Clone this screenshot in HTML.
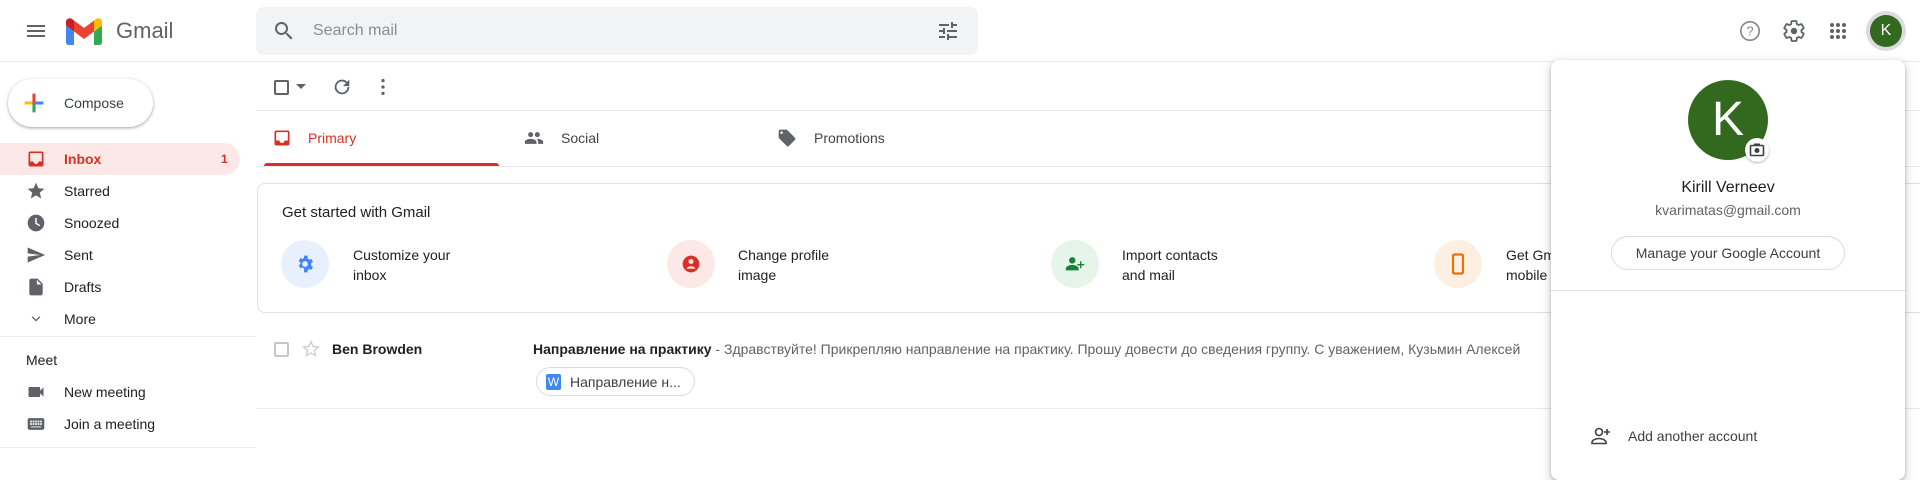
<!DOCTYPE html>
<html><head><meta charset="utf-8"><style>
*{box-sizing:border-box;margin:0;padding:0}
body{width:1920px;height:454px;overflow:hidden;background:#fff;font-family:"Liberation Sans",Arial,sans-serif;color:#202124;position:relative}
.a{position:absolute}
.t{position:absolute;white-space:nowrap}
.row{position:absolute;left:0;width:240px;height:32px}
.row .t{left:64px;top:8px;font-size:14px;color:#202124}
.row svg{position:absolute;left:26px;top:6px}
.circ{position:absolute;width:48px;height:48px;border-radius:50%}
.ct{position:absolute;font-size:14px;line-height:20px;color:#202124}
</style></head><body>
<!-- header -->
<svg class="a" style="left:24px;top:19px" width="24" height="24" viewBox="0 0 24 24"><path d="M3 18h18v-2H3v2zm0-5h18v-2H3v2zm0-7v2h18V6H3z" fill="#5f6368"/></svg>
<svg class="a" style="left:66px;top:18px" width="36" height="27" viewBox="0 0 36 27"><path d="M2.5 27H8V13.5L0 7.5v17A2.5 2.5 0 002.5 27z" fill="#4285f4"/><path d="M28 27h5.5A2.5 2.5 0 0036 24.5v-17l-8 6z" fill="#34a853"/><path d="M28 2.5v11l8-6V4c0-3-3.5-4.8-6-3z" fill="#fbbc04"/><path d="M8 13.5v-11l10 7.5 10-7.5v11l-10 7.5z" fill="#ea4335"/><path d="M0 4v3.5l8 6v-11L6 1C3.5-.8 0 1 0 4z" fill="#c5221f"/></svg>
<div class="t" style="left:116px;top:18px;font-size:22px;color:#5f6368">Gmail</div>
<div class="a" style="left:256px;top:7px;width:722px;height:48px;background:#f1f3f4;border-radius:8px"></div>
<svg class="a" style="left:272px;top:19px" width="24" height="24" viewBox="0 0 24 24"><path d="M15.5 14h-.79l-.28-.27A6.47 6.47 0 0016 9.5 6.5 6.5 0 109.5 16c1.61 0 3.09-.59 4.23-1.57l.27.28v.79l5 4.99L20.49 19l-4.99-5zm-6 0C7.01 14 5 11.99 5 9.5S7.01 5 9.5 5 14 7.01 14 9.5 11.99 14 9.5 14z" fill="#5f6368"/></svg>
<div class="t" style="left:313px;top:22px;font-size:16px;color:#8a8d91">Search mail</div>
<svg class="a" style="left:936px;top:19px" width="24" height="24" viewBox="0 0 24 24"><path d="M3 17v2h6v-2H3zM3 5v2h10V5H3zm10 16v-2h8v-2h-8v-2h-2v6h2zM7 9v2H3v2h4v2h2V9H7zm14 4v-2H11v2h10zm-6-4h2V7h4V5h-4V3h-2v6z" fill="#5f6368"/></svg>
<svg class="a" style="left:1738px;top:19px" width="24" height="24" viewBox="0 0 24 24"><circle cx="12" cy="12" r="9.2" fill="none" stroke="#80868b" stroke-width="1.6"/><text x="12" y="16.5" font-size="13" text-anchor="middle" fill="#80868b" font-family="Liberation Sans">?</text></svg>
<svg class="a" style="left:1782px;top:19px" width="24" height="24" viewBox="0 0 24 24"><path d="M19.43 12.98c.04-.32.07-.64.07-.98s-.03-.66-.07-.98l2.11-1.65a.5.5 0 00.12-.64l-2-3.46a.5.5 0 00-.61-.22l-2.49 1a7.3 7.3 0 00-1.69-.98l-.38-2.65A.49.49 0 0014 2h-4a.49.49 0 00-.49.42l-.38 2.65c-.61.25-1.17.59-1.69.98l-2.49-1a.5.5 0 00-.61.22l-2 3.46a.49.49 0 00.12.64l2.11 1.65c-.04.32-.07.65-.07.98s.03.66.07.98l-2.11 1.65a.5.5 0 00-.12.64l2 3.46c.12.22.39.3.61.22l2.49-1c.52.4 1.08.73 1.69.98l.38 2.65c.03.24.24.42.49.42h4c.25 0 .46-.18.49-.42l.38-2.65c.61-.25 1.17-.59 1.69-.98l2.49 1c.23.09.49 0 .61-.22l2-3.46a.5.5 0 00-.12-.64l-2.11-1.65z" fill="none" stroke="#5f6368" stroke-width="1.8"/><circle cx="12" cy="12" r="3.2" fill="#5f6368"/></svg>
<svg class="a" style="left:1826px;top:19px" width="24" height="24" viewBox="0 0 24 24" fill="#5f6368"><circle cx="6" cy="6" r="2"/><circle cx="12" cy="6" r="2"/><circle cx="18" cy="6" r="2"/><circle cx="6" cy="12" r="2"/><circle cx="12" cy="12" r="2"/><circle cx="18" cy="12" r="2"/><circle cx="6" cy="18" r="2"/><circle cx="12" cy="18" r="2"/><circle cx="18" cy="18" r="2"/></svg>
<div class="a" style="left:1866px;top:11px;width:40px;height:40px;border-radius:50%;background:#dadce0"></div>
<div class="a" style="left:1870px;top:15px;width:32px;height:32px;border-radius:50%;background:#33691e;color:#fff;font-size:16px;text-align:center;line-height:32px">K</div>
<div class="a" style="left:0;top:61px;width:1920px;height:1px;background:#e8eaed"></div>
<!-- sidebar -->
<div class="a" style="left:8px;top:79px;width:145px;height:48px;border-radius:24px;background:#fff;box-shadow:0 1px 2px rgba(60,64,67,.3),0 1px 3px 1px rgba(60,64,67,.15)"></div>
<svg class="a" style="left:20px;top:89px" width="28" height="28" viewBox="0 0 36 36"><path d="M16 16v14h4V20z" fill="#34a853"/><path d="M30 16H20l-4 4h14z" fill="#4285f4"/><path d="M6 16v4h10l4-4z" fill="#fbbc05"/><path d="M20 16V6h-4v14z" fill="#ea4335"/></svg>
<div class="t" style="left:64px;top:95px;font-size:14px;font-weight:500;color:#3c4043">Compose</div>
<div class="a" style="left:0;top:143px;width:240px;height:32px;background:#fce8e6;border-radius:0 16px 16px 0"></div>
<div class="row" style="top:143px"><svg width="20" height="20" viewBox="0 0 24 24"><path d="M19 3H5c-1.1 0-2 .9-2 2v14c0 1.1.9 2 2 2h14c1.1 0 2-.9 2-2V5c0-1.1-.9-2-2-2zm0 12h-4c0 1.66-1.35 3-3 3s-3-1.34-3-3H5V5h14v10z" fill="#d93025"/></svg><div class="t" style="color:#d93025;font-weight:bold">Inbox</div><div class="t" style="left:221px;color:#d93025;font-size:12px;font-weight:bold;top:9px">1</div></div>
<div class="row" style="top:175px"><svg width="20" height="20" viewBox="0 0 24 24"><path d="M12 17.27L18.18 21l-1.64-7.03L22 9.24l-7.19-.61L12 2 9.19 8.63 2 9.24l5.46 4.73L5.82 21z" fill="#5f6368"/></svg><div class="t">Starred</div></div>
<div class="row" style="top:207px"><svg width="20" height="20" viewBox="0 0 24 24"><circle cx="12" cy="12" r="10" fill="#5f6368"/><path d="M12 6v6.5l4.5 2.7" stroke="#fff" stroke-width="1.8" fill="none"/></svg><div class="t">Snoozed</div></div>
<div class="row" style="top:239px"><svg width="20" height="20" viewBox="0 0 24 24"><path d="M2.01 21L23 12 2.01 3 2 10l15 2-15 2z" fill="#5f6368"/></svg><div class="t">Sent</div></div>
<div class="row" style="top:271px"><svg width="20" height="20" viewBox="0 0 24 24"><path d="M6 2c-1.1 0-2 .9-2 2v16c0 1.1.9 2 2 2h12c1.1 0 2-.9 2-2V8l-6-6H6zm7 7V3.5L18.5 9H13z" fill="#5f6368"/></svg><div class="t">Drafts</div></div>
<div class="row" style="top:303px"><svg width="20" height="20" viewBox="0 0 24 24"><path d="M7.4 9.3L12 13.9l4.6-4.6" stroke="#5f6368" stroke-width="1.5" fill="none"/></svg><div class="t">More</div></div>
<div class="a" style="left:0;top:336px;width:256px;height:1px;background:#e8eaed"></div>
<div class="t" style="left:26px;top:352px;font-size:14px;font-weight:500">Meet</div>
<div class="row" style="top:376px"><svg width="20" height="20" viewBox="0 0 24 24"><path d="M17 10.5V7c0-.55-.45-1-1-1H4c-.55 0-1 .45-1 1v10c0 .55.45 1 1 1h12c.55 0 1-.45 1-1v-3.5l4 4v-11l-4 4z" fill="#5f6368"/></svg><div class="t">New meeting</div></div>
<div class="row" style="top:408px"><svg width="20" height="20" viewBox="0 0 24 24"><path d="M20 5H4c-1.1 0-2 .9-2 2v10c0 1.1.9 2 2 2h16c1.1 0 2-.9 2-2V7c0-1.1-.9-2-2-2zM6 16v-1h12v1H6zm-1-8h2v2H5V8zm3 0h2v2H8V8zm3 0h2v2h-2V8zm3 0h2v2h-2V8zm3 0h2v2h-2V8zM5 11h2v2H5v-2zm3 0h2v2H8v-2zm3 0h2v2h-2v-2zm3 0h2v2h-2v-2zm3 0h2v2h-2v-2z" fill="#5f6368"/></svg><div class="t">Join a meeting</div></div>
<div class="a" style="left:0;top:447px;width:256px;height:1px;background:#e8eaed"></div>
<!-- toolbar -->
<div class="a" style="left:274px;top:80px;width:15px;height:15px;border:2px solid #5f6368;border-radius:2px"></div>
<svg class="a" style="left:296px;top:84px" width="10" height="6"><path d="M0 0h10L5 5z" fill="#5f6368"/></svg>
<svg class="a" style="left:331px;top:76px" width="22" height="22" viewBox="0 0 24 24"><path d="M17.65 6.35A7.96 7.96 0 0012 4a8 8 0 108 8h-2a6 6 0 11-1.76-4.24L13 11h7V4l-2.35 2.35z" fill="#5f6368"/></svg>
<svg class="a" style="left:372px;top:76px" width="22" height="22" viewBox="0 0 24 24" fill="#5f6368"><circle cx="12" cy="5" r="1.8"/><circle cx="12" cy="12" r="1.8"/><circle cx="12" cy="19" r="1.8"/></svg>
<div class="a" style="left:256px;top:110px;width:1664px;height:1px;background:#e8eaed"></div>
<!-- tabs -->
<svg class="a" style="left:272px;top:128px" width="20" height="20" viewBox="0 0 24 24"><path d="M19 3H5c-1.1 0-2 .9-2 2v14c0 1.1.9 2 2 2h14c1.1 0 2-.9 2-2V5c0-1.1-.9-2-2-2zm0 12h-4c0 1.66-1.35 3-3 3s-3-1.34-3-3H5V5h14v10z" fill="#d93025"/></svg>
<div class="t" style="left:308px;top:130px;font-size:14px;color:#d93025;font-weight:500">Primary</div>
<div class="a" style="left:264px;top:163px;width:235px;height:3px;background:#d93025;border-radius:3px 3px 0 0"></div>
<svg class="a" style="left:524px;top:128px" width="20" height="20" viewBox="0 0 24 24"><path d="M16 11c1.66 0 2.99-1.34 2.99-3S17.66 5 16 5c-1.66 0-3 1.34-3 3s1.34 3 3 3zm-8 0c1.66 0 2.99-1.34 2.99-3S9.66 5 8 5C6.34 5 5 6.34 5 8s1.34 3 3 3zm0 2c-2.33 0-7 1.17-7 3.5V19h14v-2.5c0-2.33-4.67-3.5-7-3.5zm8 0c-.29 0-.62.02-.97.05 1.16.84 1.97 1.97 1.97 3.45V19h6v-2.5c0-2.33-4.67-3.5-7-3.5z" fill="#5f6368"/></svg>
<div class="t" style="left:561px;top:130px;font-size:14px;color:#444">Social</div>
<svg class="a" style="left:777px;top:128px" width="20" height="20" viewBox="0 0 24 24"><path d="M21.41 11.58l-9-9A2 2 0 0011 2H4c-1.1 0-2 .9-2 2v7c0 .55.22 1.05.59 1.42l9 9a2 2 0 002.82 0l7-7a2 2 0 000-2.84zM5.5 7A1.5 1.5 0 115.5 4a1.5 1.5 0 010 3z" fill="#5f6368"/></svg>
<div class="t" style="left:814px;top:130px;font-size:14px;color:#444">Promotions</div>
<div class="a" style="left:256px;top:166px;width:1664px;height:1px;background:#e8eaed"></div>
<!-- get started card -->
<div class="a" style="left:257px;top:183px;width:1700px;height:130px;border:1px solid #e0e0e0;border-radius:8px"></div>
<div class="t" style="left:282px;top:204px;font-size:15px;font-weight:500;color:#202124">Get started with Gmail</div>
<div class="circ" style="left:281px;top:240px;background:#e8f0fe"></div>
<svg class="a" style="left:295px;top:254px" width="20" height="20" viewBox="0 0 24 24"><path d="M19.43 12.98c.04-.32.07-.64.07-.98s-.03-.66-.07-.98l2.11-1.65-2-3.46-2.49 1a7.3 7.3 0 00-1.69-.98L14.99 2h-4l-.38 2.93c-.61.25-1.17.59-1.69.98l-2.49-1-2 3.46 2.11 1.65c-.04.32-.07.65-.07.98s.03.66.07.98l-2.11 1.65 2 3.46 2.49-1c.52.4 1.08.73 1.69.98L10.99 22h4l.38-2.93c.61-.25 1.17-.59 1.69-.98l2.49 1 2-3.46-2.12-1.65zM12 15.5a3.5 3.5 0 110-7 3.5 3.5 0 010 7z" fill="#4285f4"/></svg>
<div class="ct" style="left:353px;top:245px">Customize your<br>inbox</div>
<div class="circ" style="left:667px;top:240px;background:#fce8e6"></div>
<svg class="a" style="left:681px;top:254px" width="20" height="20" viewBox="0 0 24 24"><circle cx="12" cy="12" r="10" fill="#d93025"/><circle cx="12" cy="9" r="3" fill="#fce8e6"/><path d="M6.5 17.5c1.5-2 3.5-2.8 5.5-2.8s4 .8 5.5 2.8" fill="#fce8e6"/></svg>
<div class="ct" style="left:738px;top:245px">Change profile<br>image</div>
<div class="circ" style="left:1051px;top:240px;background:#e6f4ea"></div>
<svg class="a" style="left:1064px;top:253px" width="22" height="22" viewBox="0 0 24 24"><circle cx="9" cy="8" r="3.5" fill="#188038"/><path d="M2 19v-2c0-2.5 4.5-4 7-4s7 1.5 7 4v2z" fill="#188038"/><path d="M19 9v3h3v1.5h-3v3h-1.5v-3h-3V12h3V9z" fill="#188038"/></svg>
<div class="ct" style="left:1122px;top:245px">Import contacts<br>and mail</div>
<div class="circ" style="left:1434px;top:240px;background:#feefe3"></div>
<svg class="a" style="left:1448px;top:253px" width="20" height="22" viewBox="0 0 20 22"><rect x="5" y="1.5" width="10" height="19" rx="1.5" fill="none" stroke="#e8710a" stroke-width="2.2"/></svg>
<div class="ct" style="left:1506px;top:245px">Get Gmail<br>mobile app</div>
<!-- email row -->
<div class="a" style="left:274px;top:342px;width:15px;height:15px;border:2px solid #c4c7c5;border-radius:2px"></div>
<svg class="a" style="left:302px;top:340px" width="18" height="18" viewBox="0 0 24 24"><path d="M12 17.27L18.18 21l-1.64-7.03L22 9.24l-7.19-.61L12 2 9.19 8.63 2 9.24l5.46 4.73L5.82 21z" fill="none" stroke="#c4c7c5" stroke-width="1.5"/></svg>
<div class="t" style="left:332px;top:341px;font-size:14px;font-weight:bold">Ben Browden</div>
<div class="t" style="left:533px;top:341px;font-size:14px;color:#5f6368"><b style="color:#202124">Направление на практику</b> - Здравствуйте! Прикрепляю направление на практику. Прошу довести до сведения группу. С уважением, Кузьмин Алексей</div>
<div class="a" style="left:536px;top:367px;width:159px;height:29px;border:1px solid #dadce0;border-radius:15px"></div>
<div class="a" style="left:546px;top:374px;width:15px;height:16px;background:#4285f4;border-radius:2px;color:#fff;font-size:12px;text-align:center;line-height:16px">W</div>
<div class="t" style="left:570px;top:374px;font-size:14px;color:#3c4043">Направление н...</div>
<div class="a" style="left:256px;top:408px;width:1664px;height:1px;background:#e8eaed"></div>
<!-- account panel -->
<div class="a" style="left:1551px;top:60px;width:354px;height:420px;background:#fff;border-radius:8px;box-shadow:0 1px 3px rgba(60,64,67,.3),0 4px 8px 3px rgba(60,64,67,.15)"></div>
<div class="a" style="left:1688px;top:80px;width:80px;height:80px;border-radius:50%;background:#33691e;color:#fff;font-size:48px;text-align:center;line-height:80px">K</div>
<div class="a" style="left:1745px;top:138px;width:24px;height:24px;border-radius:50%;background:#fff;box-shadow:0 1px 2px rgba(0,0,0,.3)"></div>
<svg class="a" style="left:1749px;top:142px" width="16" height="16" viewBox="0 0 16 16"><rect x="1.5" y="3.5" width="13" height="10" rx="1" fill="none" stroke="#3c4043" stroke-width="1.6"/><rect x="5" y="1.5" width="6" height="2" fill="#3c4043"/><circle cx="8" cy="8.5" r="2.5" fill="#3c4043"/></svg>
<div class="t" style="left:1551px;width:354px;text-align:center;top:179px;font-size:16px;font-weight:500;color:#202124">Kirill Verneev</div>
<div class="t" style="left:1551px;width:354px;text-align:center;top:202px;font-size:14px;color:#5f6368">kvarimatas@gmail.com</div>
<div class="a" style="left:1611px;top:236px;width:234px;height:34px;border:1px solid #dadce0;border-radius:17px;font-size:14px;color:#3c4043;text-align:center;line-height:32px;font-weight:500">Manage your Google Account</div>
<div class="a" style="left:1551px;top:290px;width:354px;height:1px;background:#dadce0"></div>
<svg class="a" style="left:1590px;top:426px" width="22" height="20" viewBox="0 0 22 20"><circle cx="9" cy="6" r="3.5" fill="none" stroke="#3c4043" stroke-width="1.6"/><path d="M2 17.5v-1c0-2.5 4-4 7-4s7 1.5 7 4v1z" fill="none" stroke="#3c4043" stroke-width="1.6"/><path d="M17 3v6M14 6h6" stroke="#3c4043" stroke-width="1.6"/></svg>
<div class="t" style="left:1628px;top:428px;font-size:14px;color:#3c4043;font-weight:500">Add another account</div>
</body></html>
